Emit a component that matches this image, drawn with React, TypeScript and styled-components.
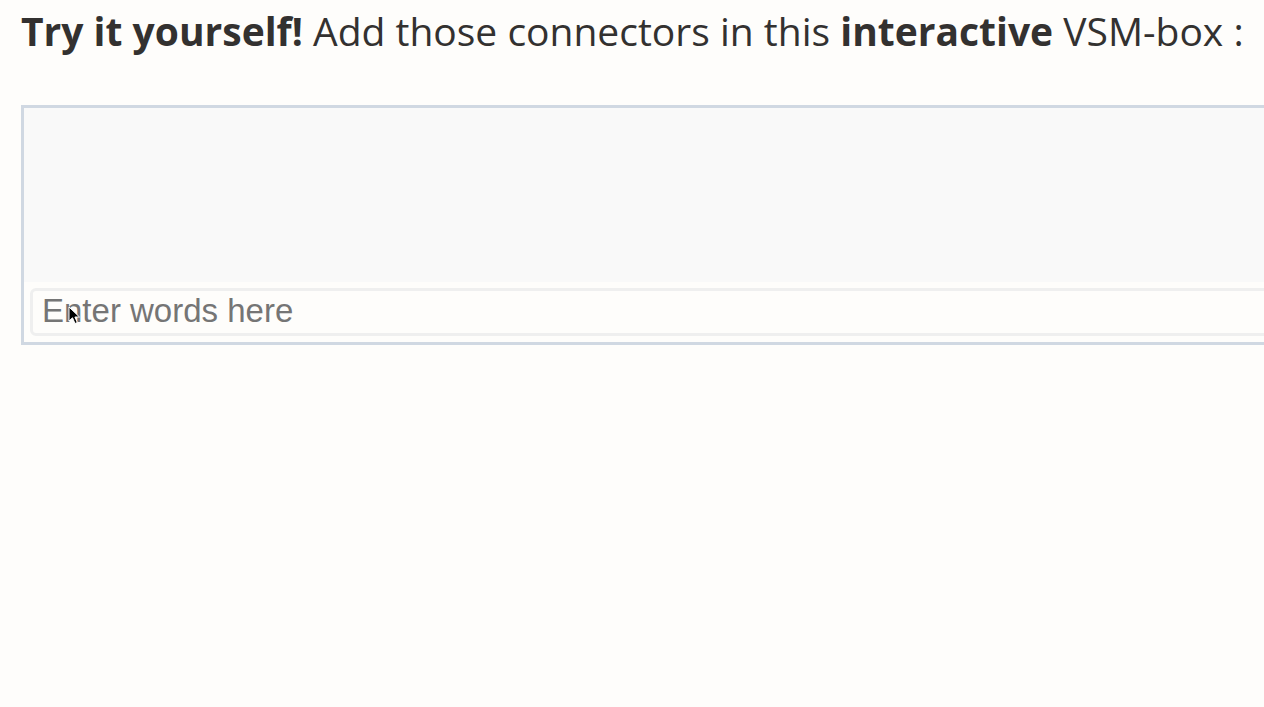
import React from 'react'
import styled, { createGlobalStyle } from 'styled-components'

const GlobalStyle = createGlobalStyle`
  html, body {
    margin: 0;
    padding: 0;
    background: #fefdfb;
    overflow: hidden;
  }
`

const Page = styled.div`
  padding: 4px 0 0 21px;
  min-height: 707px;
  box-sizing: border-box;
  font-family: 'Open Sans', sans-serif;
  color: #333130;
`

const Heading = styled.p`
  margin: 0;
  font-size: 39px;
  line-height: 54px;
  white-space: nowrap;

  b {
    font-weight: 700;
  }
`

const VsmBox = styled.div`
  margin-top: 47px;
  width: 1400px;
  border: 3px solid #d0d8e2;
  background: #fefdfb;
`

const Canvas = styled.div`
  height: 174px;
  background: #f9f9f9;
`

const InputRow = styled.div`
  position: relative;
  padding: 6px;
`

const WordInput = styled.input`
  display: block;
  width: 100%;
  box-sizing: border-box;
  height: 48px;
  border: 3px solid #efefef;
  border-radius: 6px;
  background: #fefdfb;
  padding: 0 9px 2px;
  font-family: 'Liberation Sans', Arial, sans-serif;
  font-size: 33px;
  color: #333;
  outline: none;

  &::placeholder {
    color: #757575;
  }
`

const Pointer = styled.svg`
  position: absolute;
  left: 44px;
  top: 24px;
  pointer-events: none;
`

export default function App() {
  return (
    <Page>
      <GlobalStyle />
      <Heading>
        <b>Try it yourself!</b> Add those connectors in this <b>interactive</b> VSM-box :
      </Heading>
      <VsmBox>
        <Canvas />
        <InputRow>
          <WordInput placeholder="Enter words here" />
          <Pointer width="13" height="20" viewBox="0 0 13 20">
            <path
              d="M1 1 L1 15 L4.5 11.8 L7 17.5 L9.3 16.5 L6.9 11 L11.5 11 Z"
              fill="#000"
              stroke="#fff"
              strokeWidth="1"
              strokeLinejoin="round"
            />
          </Pointer>
        </InputRow>
      </VsmBox>
    </Page>
  )
}
